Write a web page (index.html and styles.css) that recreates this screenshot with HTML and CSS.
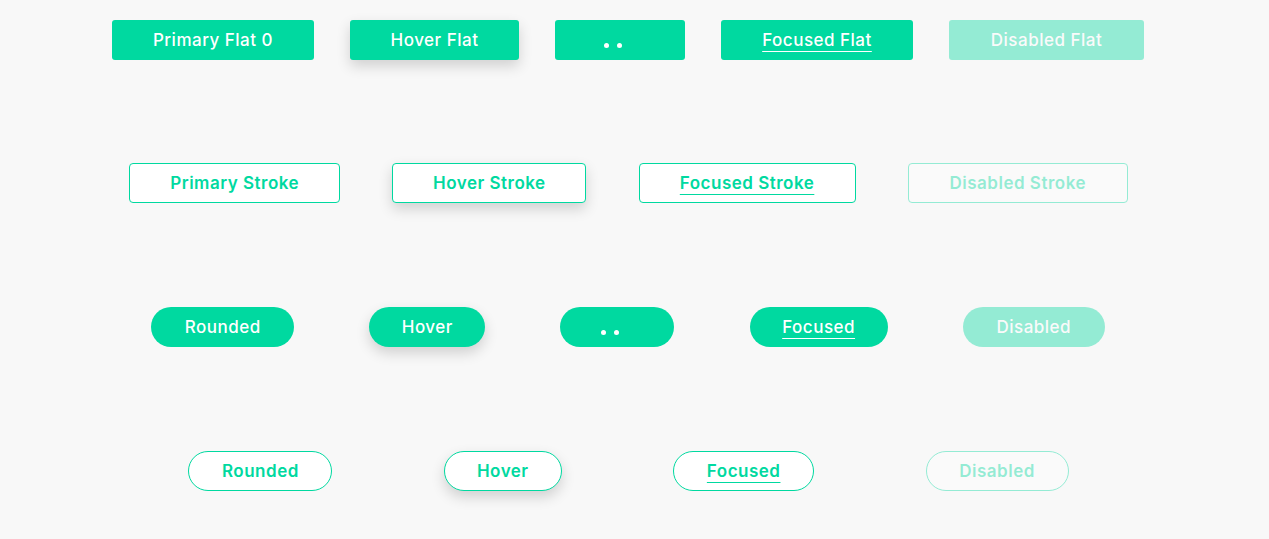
FILE: index.html
```html
<!DOCTYPE html>
<html lang="en">
<head>
<meta charset="utf-8">
<title>Buttons</title>
<link rel="stylesheet" href="styles.css">
</head>
<body>
<main class="page">
  <div class="row">
    <button class="btn btn-flat w-202">Primary Flat 0</button>
    <button class="btn btn-flat is-hover w-169">Hover Flat</button>
    <button class="btn btn-flat w-130"><span class="dots"><i class="dot"></i><i class="dot"></i><i class="dot dot-off"></i></span></button>
    <button class="btn btn-flat is-focused w-192"><span class="label">Focused Flat</span></button>
    <button class="btn btn-flat is-disabled w-195">Disabled Flat</button>
  </div>
  <div class="row row-second row-four">
    <button class="btn btn-stroke w-211">Primary Stroke</button>
    <button class="btn btn-stroke is-hover w-194">Hover Stroke</button>
    <button class="btn btn-stroke is-focused w-217"><span class="label">Focused Stroke</span></button>
    <button class="btn btn-stroke is-disabled w-220">Disabled Stroke</button>
  </div>
  <div class="row">
    <button class="btn btn-flat btn-round w-143">Rounded</button>
    <button class="btn btn-flat btn-round is-hover w-116">Hover</button>
    <button class="btn btn-flat btn-round w-114"><span class="dots"><i class="dot"></i><i class="dot"></i><i class="dot dot-off"></i></span></button>
    <button class="btn btn-flat btn-round is-focused w-138"><span class="label">Focused</span></button>
    <button class="btn btn-flat btn-round is-disabled w-142">Disabled</button>
  </div>
  <div class="row row-four">
    <button class="btn btn-stroke btn-round w-144">Rounded</button>
    <button class="btn btn-stroke btn-round is-hover w-118">Hover</button>
    <button class="btn btn-stroke btn-round is-focused w-141"><span class="label">Focused</span></button>
    <button class="btn btn-stroke btn-round is-disabled w-143">Disabled</button>
  </div>
</main>
</body>
</html>
```
FILE: styles.css
```css
html, body {
  margin: 0;
  background: #f8f8f8;
}

.page {
  width: 1104px;
  padding: 20px 0 40px 76px;
  display: flex;
  flex-direction: column;
  gap: 104px;
  font-family: Inter, "Noto Sans", sans-serif;
}

.row {
  display: flex;
  justify-content: space-evenly;
  align-items: center;
}

.row-four {
  padding-left: 1px;
}

.row-second {
  margin-top: -1px;
}

.btn {
  box-sizing: border-box;
  height: 40px;
  padding: 0;
  display: inline-flex;
  align-items: center;
  justify-content: center;
  font-family: inherit;
  font-size: 17px;
  font-weight: 500;
  letter-spacing: 0.5px;
  border: none;
  border-radius: 3px;
  cursor: pointer;
}

.btn-flat {
  background: #00d9a0;
  color: #ffffff;
}

.btn-stroke {
  background: #ffffff;
  color: #00d9a0;
  border: 1px solid #00d9a0;
  border-radius: 4px;
  font-weight: 600;
}

.btn-round {
  border-radius: 20px;
}

.is-hover {
  box-shadow: 0 6px 14px rgba(0, 0, 0, 0.16);
}

.is-focused .label {
  text-decoration: underline;
  text-decoration-thickness: 1px;
  text-underline-offset: 5px;
}

.is-disabled {
  opacity: 0.4;
  cursor: default;
}

.dots {
  display: flex;
  gap: 8px;
  margin-top: 10px;
  margin-right: 1px;
}

.dot {
  width: 5px;
  height: 5px;
  border-radius: 50%;
  background: #ffffff;
}

.dot-off {
  opacity: 0;
}

.w-114 { width: 114px; }
.w-116 { width: 116px; }
.w-118 { width: 118px; }
.w-130 { width: 130px; }
.w-138 { width: 138px; }
.w-141 { width: 141px; }
.w-142 { width: 142px; }
.w-143 { width: 143px; }
.w-144 { width: 144px; }
.w-169 { width: 169px; }
.w-192 { width: 192px; }
.w-194 { width: 194px; }
.w-195 { width: 195px; }
.w-202 { width: 202px; }
.w-211 { width: 211px; }
.w-217 { width: 217px; }
.w-220 { width: 220px; }
```
